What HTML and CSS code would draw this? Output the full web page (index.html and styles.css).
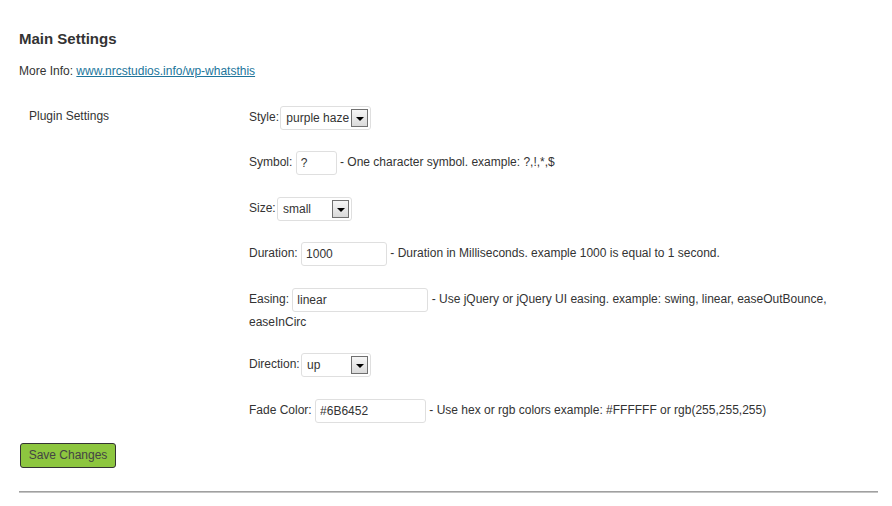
FILE: index.html
```html
<!DOCTYPE html>
<html>
<head>
<meta charset="utf-8">
<title>Main Settings</title>
<link rel="stylesheet" href="styles.css">
</head>
<body>
<div class="wrap">
  <h3 class="title">Main Settings</h3>
  <p class="info">More Info: <a href="#">www.nrcstudios.info/wp-whatsthis</a></p>
  <div class="form-table">
    <div class="th">Plugin Settings</div>
    <div class="td">
      <div class="field">Style: <span class="select-wrap"><select class="sel sel-style"><option>purple haze</option></select><span class="arrow"></span></span></div>
      <div class="field">Symbol: <input class="txt w-symbol" type="text" value="?"> - One character symbol. example: ?,!,*,$</div>
      <div class="field">Size: <span class="select-wrap"><select class="sel sel-size"><option>small</option></select><span class="arrow"></span></span></div>
      <div class="field">Duration: <input class="txt w-duration" type="text" value="1000"> - Duration in Milliseconds. example 1000 is equal to 1 second.</div>
      <div class="field">Easing: <input class="txt w-easing" type="text" value="linear"> - Use jQuery or jQuery UI easing. example: swing, linear, easeOutBounce, easeInCirc</div>
      <div class="field">Direction: <span class="select-wrap"><select class="sel sel-dir"><option>up</option></select><span class="arrow"></span></span></div>
      <div class="field">Fade Color: <input class="txt w-fade" type="text" value="#6B6452"> - Use hex or rgb colors example: #FFFFFF or rgb(255,255,255)</div>
    </div>
  </div>
  <button class="save" type="button">Save Changes</button>
  <hr class="rule">
</div>
</body>
</html>
```
FILE: styles.css
```css
html, body {
  margin: 0;
  padding: 0;
  background: #fff;
}
body {
  font-family: "Liberation Sans", Arial, sans-serif;
  font-size: 12px;
  color: #333;
}
.wrap {
  padding: 29px 14px 0 19px;
}
.title {
  margin: 0 0 13px;
  font-size: 15px;
  line-height: 20px;
  font-weight: bold;
  color: #333;
}
.info {
  margin: 0 0 15px;
  line-height: 18px;
}
.info a {
  color: #21759b;
  text-decoration: underline;
}
.form-table {
  display: grid;
  grid-template-columns: 220px 1fr;
}
.th {
  padding: 10.5px 10px;
  line-height: 20px;
}
.td {
  padding: 0 10px;
}
.field {
  padding: 10.75px 0;
  line-height: 20px;
}
.txt {
  box-sizing: border-box;
  height: 24px;
  padding: 0 4px;
  border: 1px solid #dfdfdf;
  border-radius: 3px;
  background: #fff;
  font-family: "Liberation Sans", Arial, sans-serif;
  font-size: 12px;
  color: #333;
  vertical-align: middle;
  margin: 0;
  outline: none;
}
.w-symbol { width: 41px; }
.w-duration { width: 86px; }
.w-easing { width: 136px; }
.w-fade { width: 111px; }
.select-wrap {
  position: relative;
  display: inline-block;
  vertical-align: middle;
  line-height: 0;
  margin-left: -2px;
}
.sel {
  -webkit-appearance: none;
  appearance: none;
  box-sizing: border-box;
  height: 24px;
  margin: 0;
  padding: 0 0 0 5px;
  border: 1px solid #dfdfdf;
  border-radius: 3px;
  background: #fff;
  font-family: "Liberation Sans", Arial, sans-serif;
  font-size: 12px;
  color: #333;
  outline: none;
}
.sel-style { width: 91px; }
.sel-size { width: 75px; }
.sel-dir { width: 70px; }
.arrow {
  position: absolute;
  right: 3px;
  top: 3px;
  width: 15px;
  height: 16px;
  border: 1px solid #707070;
  background: linear-gradient(#f6f6f6, #dadada);
}
.arrow::after {
  content: "";
  position: absolute;
  left: 4px;
  top: 7px;
  border-left: 4px solid transparent;
  border-right: 4px solid transparent;
  border-top: 4px solid #000;
}
.save {
  display: block;
  box-sizing: border-box;
  width: 96px;
  height: 25px;
  margin: 9px 0 0 1px;
  padding: 0;
  border: 1px solid #333;
  border-radius: 3px;
  background: #8dc63f;
  font-family: "Liberation Sans", Arial, sans-serif;
  font-size: 12px;
  color: #444;
}
.rule {
  margin: 23px 0 0;
  height: 0;
  border: 0;
  border-top: 1px solid #a0a0a0;
  border-bottom: 1px solid #c4c4c4;
}
```
